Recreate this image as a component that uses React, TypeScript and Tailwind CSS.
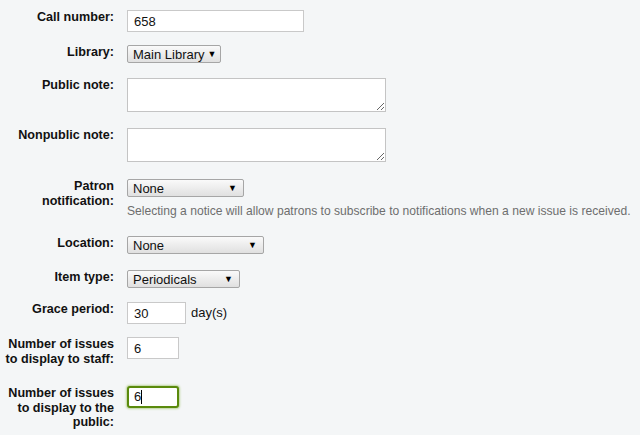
import React from 'react';

const font = { fontFamily: '"Liberation Sans", Arial, sans-serif' };

function Label({ children }: { children: React.ReactNode }) {
  return (
    <div className="w-[114px] shrink-0 text-right font-bold text-[12.6px] leading-[14.5px] text-[#111]">
      {children}
    </div>
  );
}

function FakeSelect({ value, width }: { value: string; width: string }) {
  return (
    <div
      className={`${width} h-[18px] flex items-center justify-between gap-[3px] pl-[5px] pr-[6px] border border-[#a6a6a6] rounded-[2px] bg-gradient-to-b from-[#fafafa] to-[#e0e0e0] text-[13px] text-[#111] leading-none whitespace-nowrap`}
    >
      <span>{value}</span>
      <span className="text-[9px] text-black">▼</span>
    </div>
  );
}

function TextBox({ value, width }: { value: string; width: string }) {
  return (
    <input
      readOnly
      defaultValue={value}
      className={`${width} h-[22px] px-[6px] border border-[#c9c9c9] bg-white text-[13px] text-[#111] outline-none`}
      style={font}
    />
  );
}

function NoteArea() {
  return (
    <textarea
      className="w-[259px] h-[34px] border border-[#c4c4c4] bg-white outline-none block"
      style={font}
    />
  );
}

export default function App() {
  return (
    <div className="w-[640px] h-[435px] bg-[#f4f6f7] overflow-hidden pt-[10px]" style={font}>
      <div className="flex gap-[13px] h-[35px]">
        <Label>Call number:</Label>
        <TextBox value="658" width="w-[177px]" />
      </div>
      <div className="flex gap-[13px] h-[33px]">
        <Label>Library:</Label>
        <FakeSelect value="Main Library" width="w-[94px]" />
      </div>
      <div className="flex gap-[13px] h-[50px]">
        <Label>Public note:</Label>
        <NoteArea />
      </div>
      <div className="flex gap-[13px] h-[51px]">
        <Label>Nonpublic note:</Label>
        <NoteArea />
      </div>
      <div className="flex gap-[13px] h-[57px]">
        <Label>
          Patron
          <br />
          notification:
        </Label>
        <div className="flex flex-col">
          <FakeSelect value="None" width="w-[117px]" />
          <p className="mt-[7px] text-[12.1px] leading-[14px] text-[#6e6e6e] whitespace-nowrap">
            Selecting a notice will allow patrons to subscribe to notifications when a new issue is received.
          </p>
        </div>
      </div>
      <div className="flex gap-[13px] h-[34px]">
        <Label>Location:</Label>
        <FakeSelect value="None" width="w-[137px]" />
      </div>
      <div className="flex gap-[13px] h-[32px]">
        <Label>Item type:</Label>
        <FakeSelect value="Periodicals" width="w-[113px]" />
      </div>
      <div className="flex gap-[13px] h-[35px]">
        <Label>Grace period:</Label>
        <div className="flex items-center gap-[5px] h-[22px]">
          <TextBox value="30" width="w-[59px]" />
          <span className="text-[13px] text-[#111]">day(s)</span>
        </div>
      </div>
      <div className="flex gap-[13px] h-[49px]">
        <Label>
          Number of issues
          <br />
          to display to staff:
        </Label>
        <TextBox value="6" width="w-[52px]" />
      </div>
      <div className="flex gap-[13px]">
        <Label>
          Number of issues
          <br />
          to display to the
          <br />
          public:
        </Label>
        <div className="w-[52px] h-[22px] rounded-[3px] border-2 border-[#5a8a0c] shadow-[0_0_2px_1px_rgba(120,170,40,0.45)] bg-white flex items-center pl-[5px] text-[13px] text-[#111]">
          <span>6</span>
          <span className="w-px h-[14px] bg-black" />
        </div>
      </div>
    </div>
  );
}
